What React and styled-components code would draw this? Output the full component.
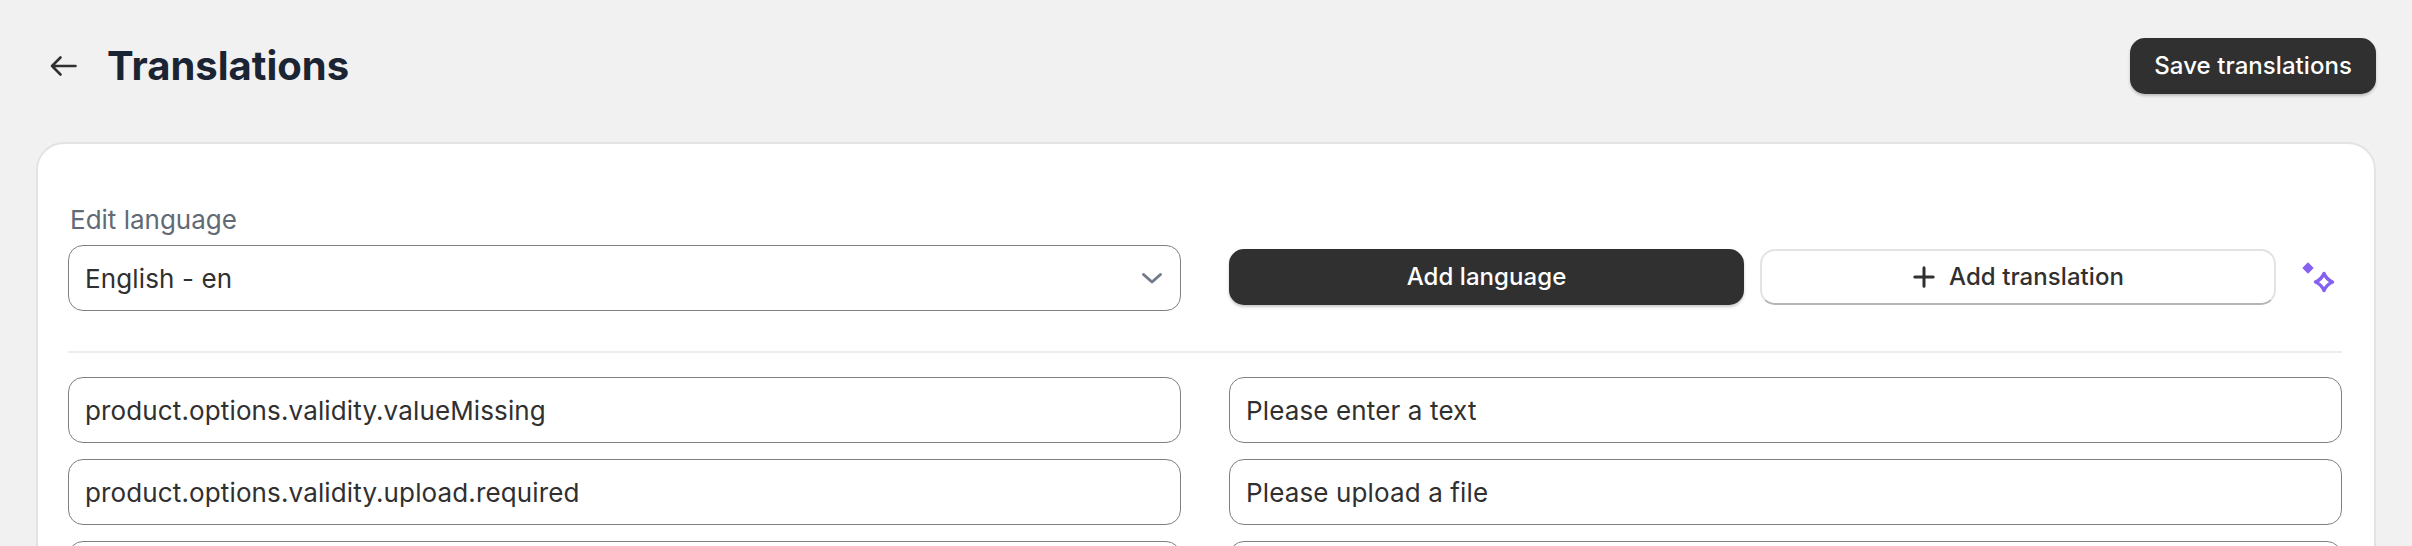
import React from "react";
import styled, { createGlobalStyle } from "styled-components";

const Global = createGlobalStyle`
  html, body { margin: 0; padding: 0; background: #f1f1f1; height: 546px; overflow: hidden; }
  body { font-family: Inter, "Liberation Sans", sans-serif; color: #303030; }
  * { box-sizing: border-box; }
`;

const Page = styled.div`
  padding: 38px 36px 0;
  height: 546px;
  overflow: hidden;
`;

const Header = styled.header`
  display: flex;
  align-items: center;
  justify-content: space-between;
  height: 56px;
  margin-bottom: 48px;
`;

const TitleGroup = styled.div`
  display: flex;
  align-items: center;
  gap: 29px;
  padding-left: 12px;
`;

const BackLink = styled.span`
  display: flex;
  width: 30px;
  height: 30px;
  align-items: center;
  justify-content: center;
`;

const Title = styled.h1`
  margin: 0;
  font-size: 40px;
  line-height: 48px;
  font-weight: 700;
  color: #1a2433;
`;

const DarkButton = styled.button`
  border: 0;
  border-radius: 15px;
  background: #303030;
  color: #fff;
  font: 500 24px/36px Inter, "Liberation Sans", sans-serif;
  letter-spacing: 0.06px;
  box-shadow: 0 2px 3px rgba(0, 0, 0, 0.22);
  height: 56px;
  padding: 0 24px;
`;

const WideDarkButton = styled(DarkButton)`
  flex: 0 0 515px;
  padding: 0;
`;

const LightButton = styled.button`
  flex: 0 0 516px;
  height: 56px;
  display: flex;
  align-items: center;
  justify-content: center;
  gap: 13px;
  border: 2px solid #e3e3e3;
  border-bottom-color: #b5b5b5;
  border-radius: 15px;
  background: #fff;
  color: #303030;
  font: 500 24px/36px Inter, "Liberation Sans", sans-serif;
  letter-spacing: 0.06px;
`;

const Card = styled.section`
  background: #fff;
  border: 2px solid #e3e3e3;
  border-radius: 28px;
  padding: 58px 32px 0 30px;
  height: 460px;
`;

const TwoColumns = styled.div`
  display: grid;
  grid-template-columns: 1113px 1113px;
  column-gap: 48px;
`;

const LanguageRow = styled(TwoColumns)`
  align-items: center;
`;

const Label = styled.div`
  font-size: 26px;
  line-height: 36px;
  color: #616a75;
  padding-left: 2px;
  margin-bottom: 7px;
`;

const Select = styled.div`
  grid-column: 1;
  height: 66px;
  display: flex;
  align-items: center;
  justify-content: space-between;
  padding: 0 16px;
  border: 1.5px solid #808080;
  border-radius: 15px;
  font-size: 26px;
  letter-spacing: 0.13px;
  color: #303030;
`;

const Actions = styled.div`
  display: flex;
  align-items: center;
  gap: 16px;
  padding-bottom: 2px;
`;

const MagicButton = styled.span`
  flex: 0 0 38px;
  display: flex;
  margin-left: 8px;
`;

const Divider = styled.hr`
  margin: 40px 0 24px;
  height: 2px;
  border: 0;
  background: #ebebf0;
`;

const Rows = styled(TwoColumns)`
  row-gap: 16px;
`;

const Field = styled.div`
  height: 66px;
  display: flex;
  align-items: center;
  padding: 0 16px;
  border: 1.5px solid #808080;
  border-radius: 15px;
  font-size: 26px;
  letter-spacing: 0.13px;
  color: #303030;
  white-space: nowrap;
`;

const rows = [
  ["product.options.validity.valueMissing", "Please enter a text"],
  ["product.options.validity.upload.required", "Please upload a file"],
  ["", ""],
];

export default function App() {
  return (
    <Page>
      <Global />
      <Header>
        <TitleGroup>
          <BackLink>
            <svg width="30" height="30" viewBox="0 0 30 30" fill="none" stroke="#303030" strokeWidth="2.6" strokeLinecap="round" strokeLinejoin="round">
              <path d="M4 15h23.500M12.500 6.500 4 15l8.500 8.500" />
            </svg>
          </BackLink>
          <Title>Translations</Title>
        </TitleGroup>
        <DarkButton>Save translations</DarkButton>
      </Header>
      <Card>
        <Label>Edit language</Label>
        <LanguageRow>
          <Select>
            English - en
            <svg width="24" height="24" viewBox="0 0 24 24" fill="none" stroke="#727c8b" strokeWidth="3" strokeLinecap="round" strokeLinejoin="round">
              <path d="M3.500 8.500 12 16l8.500-7.500" />
            </svg>
          </Select>
          <Actions>
            <WideDarkButton>Add language</WideDarkButton>
            <LightButton>
              <svg width="24" height="24" viewBox="0 0 24 24" fill="none" stroke="#303030" strokeWidth="3" strokeLinecap="round">
                <path d="M12 2.800v18.400M2.800 12h18.400" />
              </svg>
              Add translation
            </LightButton>
            <MagicButton>
              <svg width="38" height="38" viewBox="0 0 38 38">
                <path d="M8 4.300 13.700 10 8 15.700 2.300 10Z" fill="#8660f0" />
                <path d="M24 14.500c2 4.700 3.800 6.500 8.500 8.500-4.700 2-6.500 3.800-8.500 8.500-2-4.700-3.800-6.500-8.500-8.500 4.700-2 6.500-3.800 8.500-8.500Z" fill="none" stroke="#8660f0" strokeWidth="3.400" strokeLinejoin="round" transform="translate(0 1)" />
              </svg>
            </MagicButton>
          </Actions>
        </LanguageRow>
        <Divider />
        <Rows>
          {rows.map(([key, value], i) => (
            <React.Fragment key={i}>
              <Field>{key}</Field>
              <Field>{value}</Field>
            </React.Fragment>
          ))}
        </Rows>
      </Card>
    </Page>
  );
}
